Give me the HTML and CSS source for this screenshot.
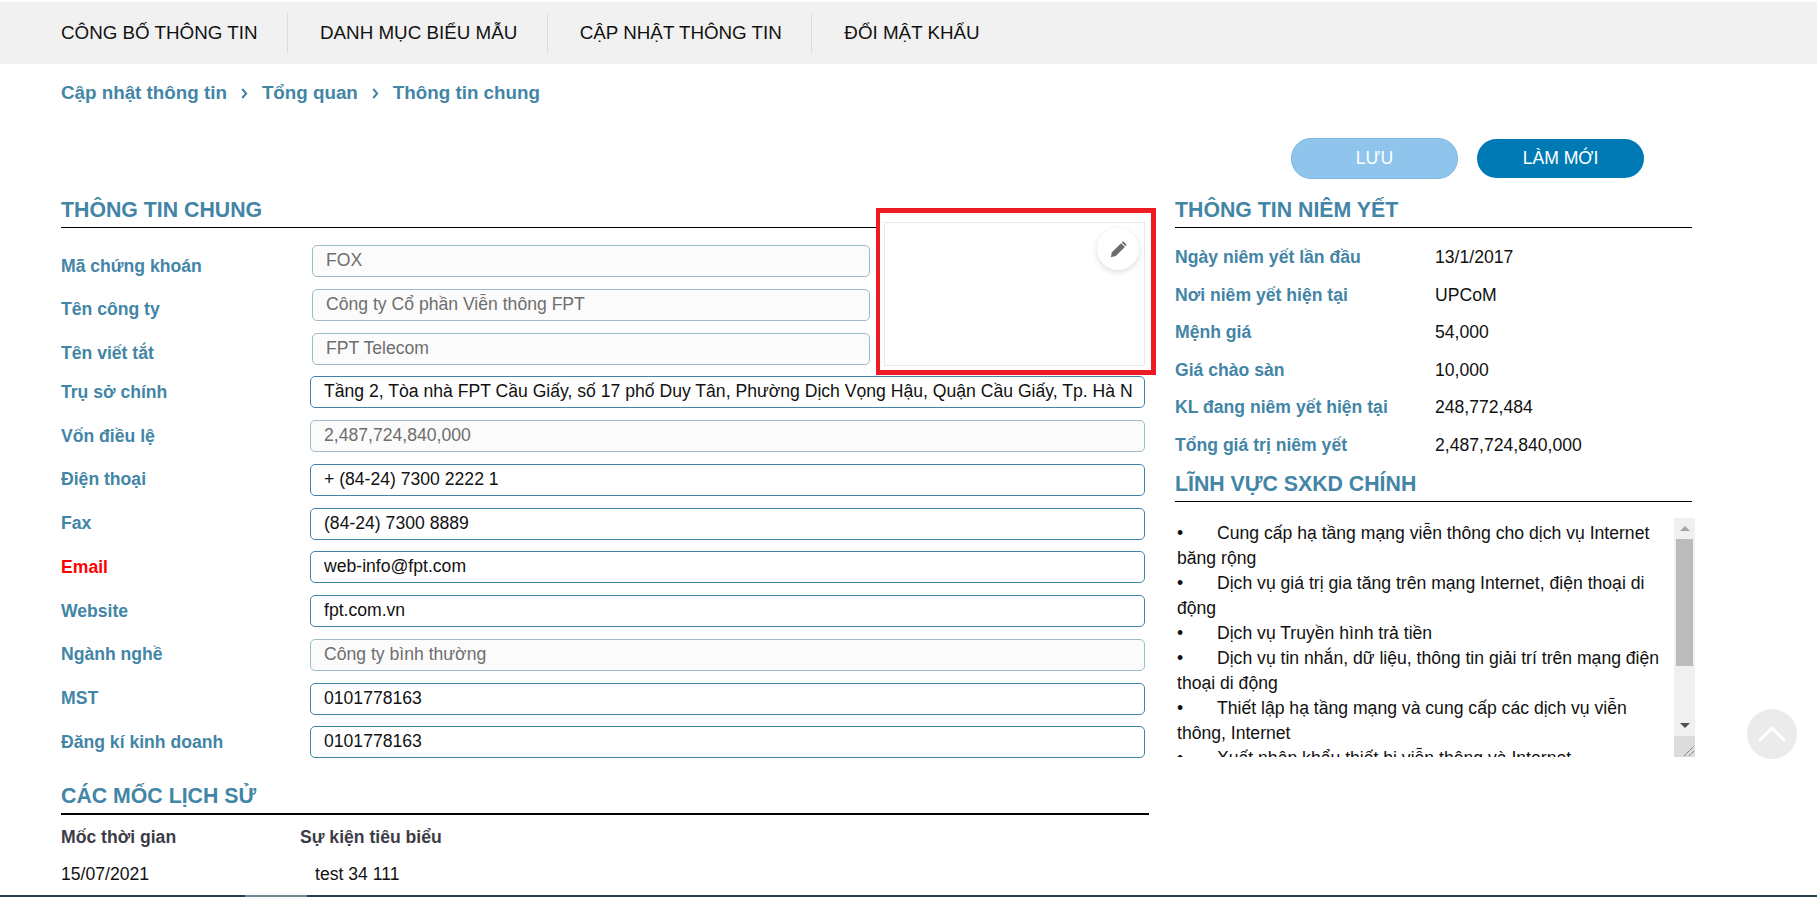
FILE: index.html
```html
<!DOCTYPE html>
<html lang="vi">
<head>
<meta charset="utf-8">
<title>Thông tin chung</title>
<link rel="stylesheet" href="styles.css">
</head>
<body>
<nav class="topnav">
  <a class="nav-item">CÔNG BỐ THÔNG TIN</a>
  <a class="nav-item">DANH MỤC BIỂU MẪU</a>
  <a class="nav-item">CẬP NHẬT THÔNG TIN</a>
  <a class="nav-item nav-last">ĐỔI MẬT KHẨU</a>
</nav>
<div class="crumbs">
  <span>Cập nhật thông tin</span>
  <svg class="chev" viewBox="0 0 7 11"><path d="M1.2 1l4 4.5-4 4.5" fill="none" stroke="#4285a6" stroke-width="2"/></svg>
  <span>Tổng quan</span>
  <svg class="chev" viewBox="0 0 7 11"><path d="M1.2 1l4 4.5-4 4.5" fill="none" stroke="#4285a6" stroke-width="2"/></svg>
  <span>Thông tin chung</span>
</div>
<div class="actions">
  <button class="btn btn-save">LƯU</button>
  <button class="btn btn-reset">LÀM MỚI</button>
</div>
<main class="columns">
  <section class="col-left">
    <div class="top-block">
      <div class="top-fields">
        <h2 class="section-title">THÔNG TIN CHUNG</h2>
        <div class="row row-short first"><label class="lbl">Mã chứng khoán</label><div class="field off"><span>FOX</span></div></div>
        <div class="row row-short"><label class="lbl">Tên công ty</label><div class="field off"><span>Công ty Cổ phần Viễn thông FPT</span></div></div>
        <div class="row row-short"><label class="lbl">Tên viết tắt</label><div class="field off"><span>FPT Telecom</span></div></div>
      </div>
      <div class="photo-frame">
        <div class="photo">
          <div class="edit-btn">
            <svg width="17" height="17" viewBox="0 0 16 16"><path d="M.8 15.2l1-4.6L10.4 2l3.6 3.6-8.6 8.6z" fill="#6d6d6d"/><path d="M11.4 1a1.2 1.2 0 0 1 1.7 0l1.9 1.9a1.2 1.2 0 0 1 0 1.7l-.3.3-3.6-3.6z" fill="#6d6d6d"/></svg>
          </div>
        </div>
      </div>
    </div>
    <div class="row"><label class="lbl">Trụ sở chính</label><div class="field"><span>Tầng 2, Tòa nhà FPT Cầu Giấy, số 17 phố Duy Tân, Phường Dịch Vọng Hậu, Quận Cầu Giấy, Tp. Hà Nội</span></div></div>
    <div class="row"><label class="lbl">Vốn điều lệ</label><div class="field off"><span>2,487,724,840,000</span></div></div>
    <div class="row"><label class="lbl">Điện thoại</label><div class="field"><span>+ (84-24) 7300 2222 1</span></div></div>
    <div class="row"><label class="lbl">Fax</label><div class="field"><span>(84-24) 7300 8889</span></div></div>
    <div class="row"><label class="lbl lbl-req">Email</label><div class="field"><span>web-info@fpt.com</span></div></div>
    <div class="row"><label class="lbl">Website</label><div class="field"><span>fpt.com.vn</span></div></div>
    <div class="row"><label class="lbl">Ngành nghề</label><div class="field off"><span>Công ty bình thường</span></div></div>
    <div class="row"><label class="lbl">MST</label><div class="field"><span>0101778163</span></div></div>
    <div class="row"><label class="lbl">Đăng kí kinh doanh</label><div class="field"><span>0101778163</span></div></div>
    <h2 class="section-title history-title">CÁC MỐC LỊCH SỬ</h2>
    <div class="hist hist-head"><span class="hist-date">Mốc thời gian</span><span>Sự kiện tiêu biểu</span></div>
    <div class="hist hist-row"><span class="hist-date">15/07/2021</span><span class="hist-event">test 34 111</span></div>
  </section>
  <aside class="col-right">
    <h2 class="section-title">THÔNG TIN NIÊM YẾT</h2>
    <dl class="facts">
      <div class="fact"><dt>Ngày niêm yết lần đầu</dt><dd>13/1/2017</dd></div>
      <div class="fact"><dt>Nơi niêm yết hiện tại</dt><dd>UPCoM</dd></div>
      <div class="fact"><dt>Mệnh giá</dt><dd>54,000</dd></div>
      <div class="fact"><dt>Giá chào sàn</dt><dd>10,000</dd></div>
      <div class="fact"><dt>KL đang niêm yết hiện tại</dt><dd>248,772,484</dd></div>
      <div class="fact"><dt>Tổng giá trị niêm yết</dt><dd>2,487,724,840,000</dd></div>
    </dl>
    <h2 class="section-title biz-title">LĨNH VỰC SXKD CHÍNH</h2>
    <div class="biz-box">
      <div class="biz-text">•	Cung cấp hạ tầng mạng viễn thông cho dịch vụ Internet băng rộng
•	Dịch vụ giá trị gia tăng trên mạng Internet, điện thoại di động
•	Dịch vụ Truyền hình trả tiền
•	Dịch vụ tin nhắn, dữ liệu, thông tin giải trí trên mạng điện thoại di động
•	Thiết lập hạ tầng mạng và cung cấp các dịch vụ viễn thông, Internet
•	Xuất nhập khẩu thiết bị viễn thông và Internet</div>
      <div class="sbar">
        <div class="sbar-btn"><svg width="10" height="5" viewBox="0 0 10 5"><path d="M5 0l5 5H0z" fill="#a3a3a3"/></svg></div>
        <div class="sbar-track"><div class="sbar-thumb"></div></div>
        <div class="sbar-btn"><svg width="10" height="5" viewBox="0 0 10 5"><path d="M0 0h10L5 5z" fill="#505050"/></svg></div>
        <div class="sbar-corner"><svg width="21" height="21" viewBox="0 0 21 21"><path d="M10 20L20 10M15 20l5-5" stroke="#6b6b6b" stroke-width="1" stroke-dasharray="1.4 .6" fill="none"/></svg></div>
      </div>
    </div>
  </aside>
</main>
<div class="to-top"><svg width="30" height="18" viewBox="0 0 30 18"><path d="M2 16L15 3l13 13" fill="none" stroke="#fff" stroke-width="3"/></svg></div>
<div class="bottom-bar"><div class="bottom-thumb"></div></div>
</body>
</html>
```

FILE: styles.css
```css
* { box-sizing: border-box; }
html, body { height: 897px; overflow: hidden; }
body {
  margin: 0;
  position: relative;
  background: #fff;
  color: #111;
  font-family: "Liberation Sans", Arial, sans-serif;
  font-size: 17.6px;
}
.topnav {
  display: flex;
  align-items: center;
  height: 62px;
  margin: 2px 0;
  padding-left: 61px;
  background: #f1f1f1;
}
.nav-item {
  display: flex;
  align-items: center;
  height: 40px;
  padding: 0 29.5px 0 32px;
  border-right: 1px solid #dadada;
  font-size: 18.8px;
  color: #111;
}
.nav-item:first-child { padding-left: 0; }
.nav-last { border-right: 0; }
.crumbs {
  display: flex;
  align-items: center;
  gap: 12px;
  height: 24px;
  margin-top: 17px;
  padding-left: 61px;
  font-size: 18.8px;
  font-weight: 700;
  color: #4285a6;
}
.chev { width: 7px; height: 11px; margin: 0 2px; }
.actions {
  display: flex;
  justify-content: flex-end;
  align-items: center;
  gap: 19px;
  height: 41px;
  margin-top: 33px;
  padding-right: 173px;
}
.btn {
  width: 167px;
  border-radius: 20px;
  font-family: inherit;
  font-size: 17.6px;
  color: #fff;
  padding: 0;
}
.btn-save { height: 41px; background: #8fc5ec; border: 1px solid #7fb8e0; }
.btn-reset { height: 39px; background: #007ab5; border: 0; }
.columns {
  display: flex;
  gap: 26px;
  margin-top: 16px;
  padding-left: 61px;
}
.col-left { width: 1088px; flex: none; }
.col-right { width: 517px; flex: none; }
.section-title {
  margin: 0;
  height: 33px;
  padding-top: 4px;
  border-bottom: 1px solid #000;
  font-size: 21.3px;
  line-height: 23px;
  font-weight: 700;
  color: #4285a6;
}
.top-block { display: flex; }
.top-fields { width: 815px; flex: none; }
.photo-frame {
  width: 280px;
  height: 167px;
  flex: none;
  margin-top: 13px;
  padding: 9px 6px 4px 4px;
  border: 5px solid #ed1c24;
  border-left-width: 4px;
  background: #fff;
}
.photo {
  position: relative;
  height: 100%;
  border: 1px solid #e8e8e8;
}
.edit-btn {
  position: absolute;
  top: 5px;
  right: 5px;
  width: 42px;
  height: 42px;
  display: flex;
  align-items: center;
  justify-content: center;
  border-radius: 50%;
  background: #fff;
  box-shadow: 0 2px 6px rgba(0,0,0,.14);
}
.row {
  display: flex;
  align-items: center;
  max-width: 1084px;
  height: 32px;
  margin-bottom: 11.75px;
}
.row-short { width: 809px; }
.row-short.first { margin-top: 17px; }
.row-short .lbl { padding-top: 10px; width: 251px; }
.lbl {
  width: 249px;
  flex: none;
  font-weight: 700;
  color: #4285a6;
}
.lbl-req { color: #f00; }
.field {
  flex: 1;
  min-width: 0;
  height: 32px;
  padding: 0 12px 2px 13px;
  display: flex;
  align-items: center;
  border: 1px solid #3f85a8;
  border-radius: 5px;
  background: #fff;
  color: #111;
}
.field span { display: block; width: 100%; overflow: hidden; white-space: nowrap; line-height: 20px; }
.field.off {
  border-color: #9cbccd;
  background: #fbfbfb;
  color: #6e6e6e;
}
.history-title { margin-top: 22px; height: 35px; padding-top: 5px; border-bottom-width: 2px; }
.hist { display: flex; }
.hist-date { width: 239px; flex: none; }
.hist-head { font-weight: 700; color: #3c3c46; margin-top: 12px; line-height: 20px; }
.hist-row { margin-top: 17px; line-height: 20px; }
.hist-event { padding-left: 15px; }
.facts { margin: 11px 0 0; }
.fact { display: flex; align-items: center; height: 37.5px; }
.fact dt { width: 260px; flex: none; font-weight: 700; color: #4285a6; }
.fact dd { margin: 0; color: #111; }
.biz-title { margin-top: 5px; }
.biz-box {
  display: flex;
  width: 520px;
  height: 239px;
  margin-top: 16px;
}
.biz-text {
  flex: 1;
  min-width: 0;
  padding: 3px 10px 0 2px;
  overflow: hidden;
  white-space: pre-wrap;
  tab-size: 40px;
  line-height: 25px;
  color: #111;
}
.sbar {
  width: 21px;
  flex: none;
  display: flex;
  flex-direction: column;
  background: #f0f0f0;
}
.sbar-btn { height: 21px; display: flex; align-items: center; justify-content: center; flex: none; }
.sbar-track { flex: 1; padding: 0 2px; }
.sbar-thumb { height: 127px; background: #bcbcbc; }
.sbar-corner { height: 21px; flex: none; background: #dcdcdc; }
.sbar-corner svg { display: block; }
.to-top {
  position: absolute;
  left: 1747px;
  top: 709px;
  width: 50px;
  height: 50px;
  display: flex;
  align-items: center;
  justify-content: center;
  border-radius: 50%;
  background: #ebebeb;
}
.bottom-bar {
  position: absolute;
  left: 0;
  right: 0;
  bottom: 0;
  height: 2px;
  background: #24404f;
}
.bottom-thumb { width: 62px; height: 2px; margin-left: 245px; background: #76868f; }
```
